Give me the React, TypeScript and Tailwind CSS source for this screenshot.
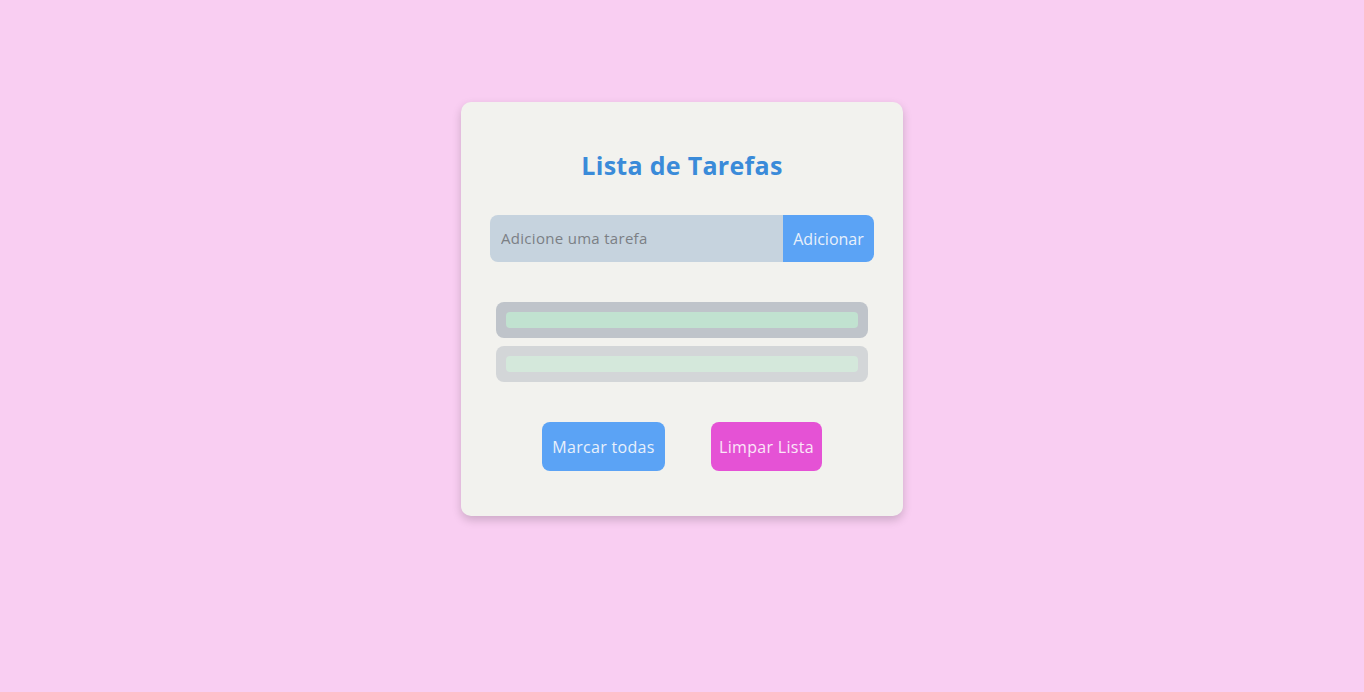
export default function App() {
  const tasks = [{ id: 1, done: false }, { id: 2, done: true }];

  return (
    <div
      className="min-h-screen w-full bg-[#f9cef2] flex justify-center pt-[102px]"
      style={{ fontFamily: '"Open Sans", "Noto Sans", sans-serif' }}
    >
      <div className="w-[442px] h-[414px] bg-[#f2f2ee] rounded-[10px] shadow-[0_4px_10px_rgba(0,0,0,0.18)] px-[29px] pt-[44px] flex flex-col">
        <h1 className="h-[40px] flex items-center justify-center text-[25px] tracking-[0.3px] font-bold text-[#3a8bd9]">
          Lista de Tarefas
        </h1>

        {/* input */}
        <div className="mt-[29px] flex h-[47px] rounded-[8px] overflow-hidden">
          <input
            type="text"
            placeholder="Adicione uma tarefa"
            className="flex-1 bg-[#c6d3de] pl-[11px] text-[15px] tracking-[0.3px] text-gray-700 placeholder:text-[#7b7f85] outline-none"
          />
          <button className="w-[91px] bg-[#5ba3f5] text-[16px] text-[#e8f0fb]">
            Adicionar
          </button>
        </div>

        {/* tasks */}
        <ul className="mt-[40px] px-[6px] flex flex-col gap-[8px]">
          {tasks.map((t) => (
            <li
              key={t.id}
              className={
                "h-[36px] rounded-[8px] bg-[#bfc4ca] p-[10px] " +
                (t.done ? "opacity-60" : "")
              }
            >
              <div className="h-[16px] w-full rounded-[4px] bg-[#c1e2d0]" />
            </li>
          ))}
        </ul>

        {/* actions */}
        <div className="mt-[40px] flex justify-center gap-[46px]">
          <button className="h-[49px] w-[123px] rounded-[8px] bg-[#5ba3f5] text-[16px] tracking-[0.3px] text-[#e8f0fb]">
            Marcar todas
          </button>
          <button className="h-[49px] w-[111px] rounded-[8px] bg-[#e552d5] text-[16px] tracking-[0.3px] text-[#fbe6f8]">
            Limpar Lista
          </button>
        </div>
      </div>
    </div>
  );
}
